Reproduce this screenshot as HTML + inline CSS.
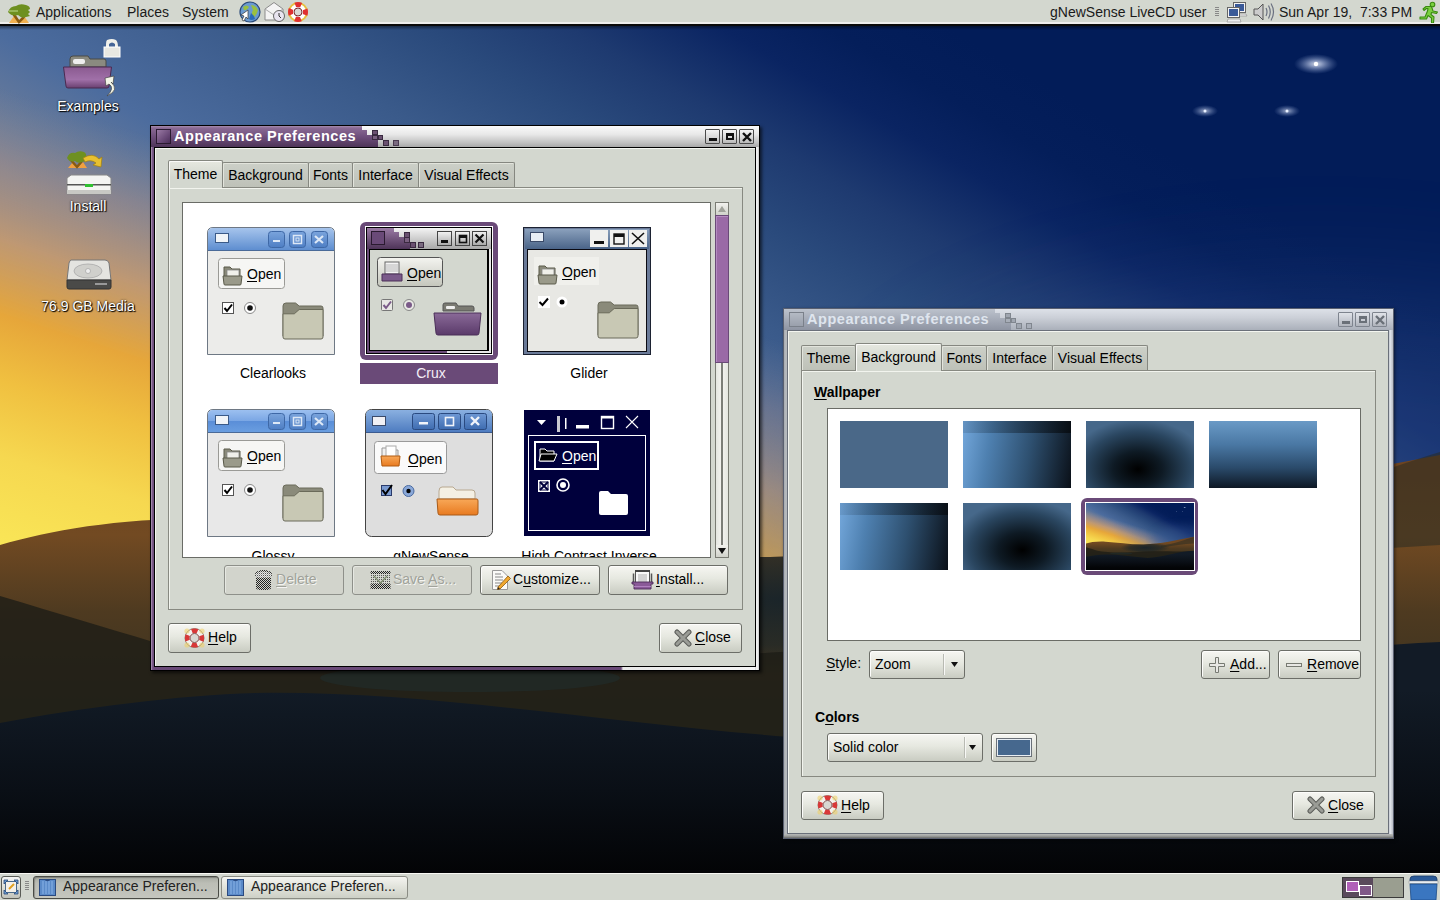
<!DOCTYPE html>
<html><head><meta charset="utf-8">
<style>
*{box-sizing:border-box;margin:0;padding:0}
html,body{width:1440px;height:900px;overflow:hidden;background:#0a1a3a}
body{position:relative;font-family:"Liberation Sans",sans-serif;font-size:14px;color:#000}
.a{position:absolute}
svg{display:block}
#wall{position:absolute;left:0;top:0;width:1440px;height:900px}
#top{position:absolute;left:0;top:0;width:1440px;height:26px;background:linear-gradient(#d3d7cf 0,#d3d7cf 92%,#eeeeec 92%);border-bottom:2px solid #0a0a0a}
#bot{position:absolute;left:0;top:873px;width:1440px;height:27px;background:#d3d7cf;border-top:1px solid #f8f8f4}
.pt{position:absolute;top:4px;font-size:14px;color:#1a1a1a;white-space:pre}
.dlabel{position:absolute;color:#fff;font-size:14px;text-shadow:1px 1px 1px #000,0 0 2px #000;white-space:pre;text-align:center}

.win{position:absolute}
.tb-purple{background:linear-gradient(#a68cae 0,#8a6a94 2px,#6f4f7c 50%,#4e3458 100%)}
.tb-gray{background:linear-gradient(#fafafa 0,#e8e8e8 40%,#c0c0c0 80%,#a8a8a8 100%)}
.wbody{background:#d3d7cf}
.ttl{position:absolute;font-weight:bold;color:#fff;font-size:14.5px;letter-spacing:.55px;white-space:pre}
.tbb{position:absolute;width:15px;height:15px;border:1px solid #4a4a4a;border-radius:1px;background:linear-gradient(#f4f4f4,#d8d8d8 60%,#b8b8b8)}
.tab{position:absolute;height:25px;border:1px solid #858780;border-bottom:none;border-radius:2px 2px 0 0;background:linear-gradient(#ccd0c8,#bec1b8);white-space:pre;font-size:14px;padding-top:4px;text-align:center;box-shadow:inset 1px 1px 0 #e2e4dc}
.tab.act{height:28px;background:linear-gradient(#e6e8e0,#d3d7cf 60%);box-shadow:inset 1px 1px 0 #fafaf8;z-index:2;padding-top:5px}
.nb{position:absolute;border:1px solid #878981;box-shadow:inset 1px 1px 0 #f2f4ee}
.list{position:absolute;background:#fff;border:1px solid #6a6c66}
.btn{position:absolute;border:1px solid #6c6e68;border-radius:3px;background:linear-gradient(#f6f6f2 0,#e6e8e0 45%,#c9ccc2 100%);box-shadow:inset 1px 1px 0 #fdfdfb;white-space:pre;font-size:14px}
.btn.dis{background:#d2d4cc;border-color:#8e908a;box-shadow:inset 1px 1px 0 #e6e8e2;color:#a0a29a;text-shadow:1px 1px 0 #f4f4f2}
.bt{position:absolute;white-space:pre}
.u{text-decoration:underline;text-underline-offset:2px}
.lbl{position:absolute;white-space:pre;font-size:14px;text-align:center}

.tb-i1{background:linear-gradient(#bcc2cc 0,#aab0bc 40%,#8e94a2 100%)}
.tb-i2{background:linear-gradient(#dde1e8 0,#ccd0d8 40%,#aab0ba 100%)}
.ttl2{position:absolute;font-weight:bold;color:#dfe5ee;font-size:14.5px;letter-spacing:.55px;white-space:pre}
.tbb2{position:absolute;width:15px;height:15px;border:1px solid #7e848e;border-radius:1px;background:linear-gradient(#e0e3e8,#c4c8d0 60%,#b0b4bc)}
.combo{position:absolute;border:1px solid #6c6e68;border-radius:3px;background:linear-gradient(#f6f6f2 0,#e6e8e0 45%,#c9ccc2 100%);box-shadow:inset 1px 1px 0 #fdfdfb;white-space:pre;font-size:14px}
.wt{position:absolute;width:108px;height:67px}
</style></head><body>
<svg id="wall" width="1440" height="900" viewBox="0 0 1440 900">
<defs>
<linearGradient id="sky" x1="900" y1="0" x2="602" y2="518" gradientUnits="userSpaceOnUse">
<stop offset="0" stop-color="#021c58"/>
<stop offset="0.1" stop-color="#041e5a"/>
<stop offset="0.19" stop-color="#0a2462"/>
<stop offset="0.317" stop-color="#1e3a70"/>
<stop offset="0.44" stop-color="#2a4a7c"/>
<stop offset="0.583" stop-color="#3a5a8a"/>
<stop offset="0.8" stop-color="#4c6c9e"/>
<stop offset="1" stop-color="#7a8498"/>
</linearGradient>
<linearGradient id="sunl" x1="0" y1="560" x2="139" y2="132" gradientUnits="userSpaceOnUse">
<stop offset="0" stop-color="#fae858" stop-opacity="1"/>
<stop offset="0.22" stop-color="#f6d850" stop-opacity="1"/>
<stop offset="0.38" stop-color="#f0c040" stop-opacity="1"/>
<stop offset="0.52" stop-color="#e6a63a" stop-opacity="1"/>
<stop offset="0.68" stop-color="#c49a70" stop-opacity="0.92"/>
<stop offset="0.85" stop-color="#9a8a8a" stop-opacity="0.6"/>
<stop offset="1" stop-color="#7a8498" stop-opacity="0"/>
</linearGradient>
<linearGradient id="sunm" x1="0" y1="0" x2="1440" y2="0" gradientUnits="userSpaceOnUse">
<stop offset="0" stop-color="#fff"/>
<stop offset="0.25" stop-color="#fff"/>
<stop offset="0.55" stop-color="#aaa"/>
<stop offset="0.8" stop-color="#000"/>
</linearGradient>
<filter id="blur" x="-50%" y="-50%" width="200%" height="200%"><feGaussianBlur stdDeviation="60"/></filter>
<mask id="sunmask"><rect width="1440" height="900" fill="url(#sunm)"/></mask>
<radialGradient id="star" cx="0.5" cy="0.5" r="0.5">
<stop offset="0" stop-color="#fff" stop-opacity="1"/>
<stop offset="0.25" stop-color="#dfe8ff" stop-opacity=".8"/>
<stop offset="1" stop-color="#8aa0d0" stop-opacity="0"/>
</radialGradient>
<linearGradient id="hill1" x1="0" y1="480" x2="0" y2="700" gradientUnits="userSpaceOnUse">
<stop offset="0" stop-color="#6e4420"/>
<stop offset="0.25" stop-color="#724a22"/>
<stop offset="0.6" stop-color="#4e3a20"/>
<stop offset="1" stop-color="#3a3220"/>
</linearGradient>
<linearGradient id="hill3" x1="0" y1="690" x2="0" y2="872" gradientUnits="userSpaceOnUse">
<stop offset="0" stop-color="#121b26"/>
<stop offset="0.55" stop-color="#0a0f16"/>
<stop offset="1" stop-color="#030406"/>
</linearGradient>
</defs>
<g id="wallg"><rect width="1440" height="900" fill="url(#sky)"/>
<rect width="1440" height="900" fill="url(#sunl)" mask="url(#sunmask)"/>
<ellipse cx="1320" cy="470" rx="420" ry="170" fill="#3a5a98" opacity=".35" filter="url(#blur)"/>
<ellipse cx="1316" cy="64" rx="22" ry="10" fill="url(#star)" opacity=".8"/>
<ellipse cx="1205" cy="111" rx="13" ry="6" fill="url(#star)" opacity=".6"/>
<ellipse cx="1287" cy="111" rx="13" ry="6" fill="url(#star)" opacity=".6"/>
<circle cx="1316" cy="64" r="2.2" fill="#fff"/><circle cx="1205" cy="111" r="1.5" fill="#e8f0ff"/><circle cx="1287" cy="111" r="1.5" fill="#e8f0ff"/>
<path id="h1p" d="M0 545 C60 528 140 514 260 520 C420 528 600 560 770 557 C1000 552 1200 500 1440 455 L1440 900 L0 900 Z" fill="url(#hill1)"/>
<radialGradient id="tealg" cx="0.5" cy="0.5" r="0.5"><stop offset="0" stop-color="#17232a" stop-opacity=".95"/><stop offset=".6" stop-color="#1c2628" stop-opacity=".7"/><stop offset="1" stop-color="#1c2628" stop-opacity="0"/></radialGradient>
<clipPath id="h1c"><path d="M0 545 C60 528 140 514 260 520 C420 528 600 560 770 557 C1000 552 1200 500 1440 455 L1440 900 L0 900 Z"/></clipPath>
<ellipse cx="790" cy="600" rx="330" ry="75" fill="url(#tealg)" clip-path="url(#h1c)"/>
<path d="M0 596 C60 614 110 629 150 641 C300 672 500 670 780 652 C1000 640 1200 652 1440 650 L1440 900 L0 900 Z" fill="#1c1c16" opacity="0.78"/>
<path d="M1000 575 C1200 540 1350 480 1440 452 L1440 545 C1300 552 1150 575 1000 600Z" fill="#2a2c22" opacity="0.55"/>
<ellipse cx="470" cy="678" rx="150" ry="14" fill="#1e3032" opacity=".45"/>
<path d="M0 723 C80 708 180 695 255 693 C420 690 600 722 790 737 C1000 745 1200 650 1440 642 L1440 900 L0 900 Z" fill="url(#hill3)"/></g>
</svg>

<!-- top panel -->
<div id="top">
<svg class="a" style="left:6px;top:2px" width="26" height="22" viewBox="0 0 26 22">
<path d="M3 21 L8 14 L13 19 L18 14 L23 21Z" fill="#f0b050"/>
<path d="M6 10 L13 20 L17 16 L20 11" fill="none" stroke="#8a5a10" stroke-width="2.6"/>
<path d="M2 10 Q4 4 10 4 Q14 1 20 3 Q24 4 24 7 L22 8 L24 10 L22 12 L24 14 L20 15 Q16 17 12 13 Q6 15 2 10Z" fill="#6e9020"/>
<path d="M3 9 H12" stroke="#a8c870" stroke-width="1.4"/>
</svg>
<div class="pt" style="left:36px">Applications</div>
<div class="pt" style="left:127px">Places</div>
<div class="pt" style="left:182px">System</div>
<svg class="a" style="left:239px;top:1px" width="22" height="22" viewBox="0 0 22 22">
<circle cx="11" cy="11" r="10" fill="#6a9ad0" stroke="#2a4a78" stroke-width="1.2"/>
<path d="M4 6 Q8 3 10 6 Q8 10 5 9Z M12 4 Q17 4 19 9 Q18 14 14 17 Q12 12 14 9Z" fill="#9ac040"/>
<path d="M12 12 Q15 14 16 18 Q12 20 10 18Z" fill="#2a6ab8"/>
<path d="M2 14 L9 9 L9 18 L7 16 L5 20 L3 19 L5 15Z" fill="#fff" stroke="#333" stroke-width=".7"/>
</svg>
<svg class="a" style="left:264px;top:1px" width="22" height="22" viewBox="0 0 22 22">
<path d="M1 8 L10 1.5 L19 8 V19 H1Z" fill="#f4f4f4" stroke="#8a8a8a"/>
<path d="M1 8 L10 14 L19 8" fill="none" stroke="#aaa"/>
<circle cx="15" cy="15" r="5.5" fill="#e8e4f0" stroke="#666"/>
<path d="M15 12 V15 L17 17" fill="none" stroke="#333" stroke-width="1"/>
</svg>
<svg class="a" style="left:287px;top:1px" width="22" height="22" viewBox="0 0 22 22">
<circle cx="11" cy="11" r="9" fill="#fff" stroke="#e8c040" stroke-width="2"/>
<circle cx="11" cy="11" r="7.5" fill="none" stroke="#e03030" stroke-width="5" stroke-dasharray="5.9 5.9" stroke-dashoffset="3"/>
<circle cx="11" cy="11" r="4" fill="#d8d8d4" stroke="#7a3030" stroke-width="1"/>
</svg>
<div class="pt" style="left:1050px">gNewSense LiveCD user</div>
<div class="a" style="left:1215px;top:7px;width:4px;height:9px;background:repeating-linear-gradient(#888 0,#888 1px,transparent 1px,transparent 2px)"></div>
<svg class="a" style="left:1226px;top:1px" width="22" height="22" viewBox="0 0 22 22">
<rect x="7.5" y="1.5" width="12" height="10" fill="#f4f4f4" stroke="#666"/><rect x="9" y="3" width="9" height="7" fill="#3a5a98"/>
<path d="M10 15 H21 L20 13 H11Z" fill="#eee" stroke="#888" stroke-width=".6"/>
<rect x="1.5" y="6.5" width="12" height="10" fill="#f4f4f4" stroke="#666"/><rect x="3" y="8" width="9" height="7" fill="#3a5a98"/>
<path d="M1 21 H15 L14 18 H2Z" fill="#eee" stroke="#888" stroke-width=".6"/>
</svg>
<svg class="a" style="left:1253px;top:2px" width="22" height="20" viewBox="0 0 22 20">
<path d="M1 7 H5 L10 2 V18 L5 13 H1Z" fill="#ccc" stroke="#555"/>
<path d="M13 6 Q15 10 13 14 M15.5 3.5 Q19 10 15.5 16.5 M18 1.5 Q23 10 18 18.5" fill="none" stroke="#6a7080" stroke-width="1.2"/>
</svg>
<div class="pt" style="left:1279px">Sun Apr 19,  7:33 PM</div>
<svg class="a" style="left:1417px;top:1px" width="22" height="22" viewBox="0 0 22 22">
<g fill="#7ad040" stroke="#3a8a10" stroke-width="1.1" stroke-linejoin="round">
<circle cx="15.5" cy="3.5" r="2.3"/>
<path d="M6 8 L9 5.5 H14.5 L16 10 L20.5 11 L19.5 12.5 L14.5 11.5 L14 13.5 L17 16 L16.5 22 L14.5 22 L14.5 17 L11 14.5 L9.5 18 L3 18 L3 16 L8 16 L10.5 10 L11 7.5 L9.5 7.5 L7 9.5Z"/>
</g>
</svg>
</div>

<div class="a" style="left:0;top:26px;width:1440px;height:4px;background:linear-gradient(rgba(0,0,0,.45),rgba(0,0,0,0))"></div>
<!-- desktop icons -->
<svg class="a" style="left:60px;top:38px" width="64" height="62" viewBox="0 0 64 62">
<defs><linearGradient id="pf" x1="0" y1="0" x2="0" y2="1"><stop offset="0" stop-color="#8a5a90"/><stop offset=".6" stop-color="#a070a8"/><stop offset="1" stop-color="#6a4070"/></linearGradient></defs>
<path d="M10 29 V21 Q10 18 13 18 H28 L30 21 H44 Q46 21 46 23 V29Z" fill="#8a8a80" stroke="#4a4a44"/>
<rect x="13" y="21" width="12" height="5" rx="2" fill="#eee"/>
<path d="M3.5 29 H51.5 L49 48 Q49 50 47 50 H8 Q6 50 6 48Z" fill="url(#pf)" stroke="#4a2a50"/>
<path d="M47 2 Q52 0 56 2 Q58 4 58 9 H55 V6 Q52 3 49 6 V9 H46 V6 Q46 3 47 2Z" fill="#f0f0ea"/>
<rect x="44" y="9" width="16" height="10" fill="#e8e8e2" stroke="#fff"/>
<path d="M45 40 L54 38 L53 46 L51 44 Q60 52 47 58 Q55 50 49 46 L46 48Z" fill="#f4f6e8" stroke="#444" stroke-width=".7"/>
</svg>
<div class="dlabel" style="left:28px;top:98px;width:120px">Examples</div>

<svg class="a" style="left:63px;top:150px" width="52" height="48" viewBox="0 0 52 48">
<path d="M5 18 L10 12 L15 17 L20 12 L24 18Z" fill="#f0a040"/>
<path d="M7 9 L14 17 L19 11" fill="none" stroke="#8a5a10" stroke-width="2.4"/>
<path d="M4 8 Q6 2 12 3 Q16 0 21 2 Q24 4 23 7 L21 9 L23 11 L19 12 Q15 14 12 11 Q7 13 4 8Z" fill="#6e9020"/>
<path d="M20 8 Q30 2 36 9 L39 7 L38 17 L30 15 L33 13 Q28 9 22 12Z" fill="#e8c030" stroke="#a08010" stroke-width=".7"/>
<path d="M4 28 L8 25 H44 L48 28 V44 H4Z" fill="#f4f4f2" stroke="#888"/>
<rect x="4" y="34" width="44" height="1.5" fill="#555"/>
<rect x="4" y="40" width="44" height="4" fill="#c8c8c4"/>
<rect x="22" y="34" width="8" height="3" fill="#30c030"/>
</svg>
<div class="dlabel" style="left:28px;top:198px;width:120px">Install</div>

<svg class="a" style="left:65px;top:258px" width="48" height="34" viewBox="0 0 48 34">
<path d="M6 2 H40 Q43 2 44 5 L46 22 H2 L4 5 Q5 2 6 2Z" fill="#e4e4e0" stroke="#777"/>
<ellipse cx="23" cy="13" rx="14" ry="7" fill="#d0d0cc" stroke="#aaa" stroke-width=".8"/>
<circle cx="23" cy="13" r="2.5" fill="#eee" stroke="#999" stroke-width=".6"/>
<path d="M2 22 H46 V29 Q46 31 44 31 H4 Q2 31 2 29Z" fill="#4a4a48" stroke="#333"/>
<rect x="30" y="25" width="12" height="2" fill="#999"/>
</svg>
<div class="dlabel" style="left:28px;top:298px;width:120px">76.9 GB Media</div>

<!-- ===== WINDOW 1 ===== -->
<div class="win" style="left:150px;top:125px;width:610px;height:546px;background:#000;box-shadow:2px 2px 3px rgba(0,0,0,.6)"></div>
<div class="win" style="left:151px;top:126px;width:608px;height:544px;background:linear-gradient(90deg,#c4b0cc 0,#7e5e8c 1px,#6a4a78 3px,#6a4a78 470px,#e8e8e8 472px,#f4f4f4 100%)"></div>
<div class="win" style="left:755px;top:146px;width:4px;height:524px;background:linear-gradient(90deg,#d0d0d0,#fafafa 50%,#c8c8c8)"></div>
<div class="win tb-purple" style="left:151px;top:126px;width:211px;height:21px"></div>
<div class="win tb-gray" style="left:362px;top:126px;width:397px;height:21px"></div>
<div class="win tb-purple" style="left:362px;top:130px;width:5px;height:17px;background-size:100% 21px;background-position:0 -4px"></div>
<div class="win tb-purple" style="left:367px;top:135px;width:5px;height:12px;background-size:100% 21px;background-position:0 -9px"></div>
<div class="win tb-purple" style="left:372px;top:140px;width:6px;height:7px;background-size:100% 21px;background-position:0 -14px"></div>
<div class="win" style="left:372px;top:130px;width:6px;height:5px;background:#6a5070;border:1px solid #3a2a40"></div>
<div class="win" style="left:372px;top:135px;width:6px;height:5px;background:#7a6080;border:1px solid #3a2a40"></div>
<div class="win" style="left:378px;top:135px;width:5px;height:5px;background:#6a5070;border:1px solid #3a2a40"></div>
<div class="win" style="left:383px;top:140px;width:6px;height:6px;background:#6a5070;border:1px solid #3a2a40"></div>
<div class="win" style="left:393px;top:140px;width:6px;height:6px;background:#7a6a80;border:1px solid #4a3a50"></div>
<div class="win" style="left:156px;top:129px;width:15px;height:15px;border:1px solid #2a1a30;background:linear-gradient(135deg,#9a7aa4,#6a4a78 60%,#4a2e58)"></div>
<div class="ttl" style="left:174px;top:128px">Appearance Preferences</div>
<div class="tbb" style="left:705px;top:129px"><div class="a" style="left:3px;top:8px;width:8px;height:3px;background:#111"></div></div>
<div class="tbb" style="left:722px;top:129px"><div class="a" style="left:3px;top:3px;width:8px;height:7px;border:2px solid #111;border-top-width:3px"></div></div>
<div class="tbb" style="left:739px;top:129px"><svg class="a" style="left:2px;top:2px" width="10" height="10"><path d="M1 1L9 9M9 1L1 9" stroke="#111" stroke-width="2.4"/></svg></div>
<div class="win" style="left:154px;top:147px;width:602px;height:520px;background:#000"></div>
<div class="win wbody" style="left:155px;top:148px;width:600px;height:518px;box-shadow:inset 1px 1px 0 #f4f6f0"></div>

<div class="nb" style="left:168px;top:187px;width:575px;height:423px"></div>
<div class="tab act" style="left:168px;top:160px;width:55px">Theme</div>
<div class="tab" style="left:222px;top:162px;width:87px">Background</div>
<div class="tab" style="left:308px;top:162px;width:45px">Fonts</div>
<div class="tab" style="left:352px;top:162px;width:67px">Interface</div>
<div class="tab" style="left:418px;top:162px;width:97px">Visual Effects</div>

<div class="list" style="left:182px;top:202px;width:529px;height:356px;overflow:hidden" id="themelist"><svg class="a" style="left:24px;top:24px" width="128" height="128" viewBox="0 0 128 128"><defs><linearGradient id="clg" x1="0" y1="0" x2="0" y2="1"><stop offset="0" stop-color="#a6c4ec"/><stop offset="1" stop-color="#5e8ed0"/></linearGradient>
<linearGradient id="clgb" x1="0" y1="0" x2="0" y2="1"><stop offset="0" stop-color="#7aa4dc"/><stop offset="1" stop-color="#4e7ec4"/></linearGradient></defs><path d="M.5 127.5 V6 Q.5 .5 6 .5 H122 Q127.5 .5 127.5 6 V127.5Z" fill="#ececea" stroke="#6e7884"/>
<path d="M1 23 V6 Q1 1 6 1 H122 Q127 1 127 6 V23Z" fill="url(#clg)"/>
<rect x="1" y="23" width="126" height="1" fill="#4a6a98"/>
<rect x="8.5" y="6.5" width="13" height="9" fill="#f0f4f8" stroke="#3a5a88"/>
<rect x="61.5" y="4.5" width="16" height="16" rx="3" fill="url(#clgb)" stroke="#3e68a6"/><rect x="82.5" y="4.5" width="16" height="16" rx="3" fill="url(#clgb)" stroke="#3e68a6"/><rect x="104.5" y="4.5" width="16" height="16" rx="3" fill="url(#clgb)" stroke="#3e68a6"/><rect x="66" y="13" width="7" height="2" fill="#dde8f6"/><rect x="86.5" y="8.5" width="8" height="8" fill="none" stroke="#dde8f6" stroke-width="1.5"/><rect x="89" y="11" width="3" height="3" fill="none" stroke="#dde8f6"/><path d="M108 9 L116 16 M116 9 L108 16" stroke="#dde8f6" stroke-width="2.2"/><rect x="11.5" y="31.5" width="66" height="30" rx="3" fill="#f6f6f4" stroke="#9a9a96"/><g transform="translate(16 38)">
<path d="M1 2 H7 L9 4 H17 V16 H1Z" fill="#8a8a7a" stroke="#5a5a4a" stroke-width="1"/>
<rect x="4" y="5" width="12" height="9" fill="#f0f0ea" stroke="#888" stroke-width=".8"/>
<path d="M0 11 H19 L18 19 Q18 20 17 20 H2 Q1 20 1 19Z" fill="#9a9a8a" stroke="#5a5a4a" stroke-width="1"/>
</g><text x="40" y="52" style="font-family:'Liberation Sans',sans-serif;font-size:14px" fill="#000">Open</text><rect x="40" y="54" width="10" height="1" fill="#000"/><rect x="15.5" y="75.5" width="11" height="11" fill="#fff" stroke="#555"/><path d="M17.5 81 L20 84 L25 77.5" fill="none" stroke="#000" stroke-width="2"/><circle cx="43" cy="81" r="5.5" fill="#fff" stroke="#888"/><circle cx="43" cy="81" r="2.8" fill="#111"/><g transform="translate(75 76)">
<path d="M1 3 Q1 0 4 0 H13.5 L17.2 3 H39 Q41 3 41 5 V33 H1Z" fill="#8a8a7a" stroke="#6a6a5a" stroke-width="1"/>
<path d="M1 10.8 H12.3 L17.2 6.5 H41 V34 Q41 36 39 36 H3 Q1 36 1 34Z" fill="#c8c8b4" stroke="#6a6a5a" stroke-width="1"/>
</g></svg>
<div class="a" style="left:177px;top:19px;width:138px;height:138px;border-radius:6px;background:#6a4a78"></div>
<div class="a" style="left:182px;top:23px;width:128px;height:129px;background:#fff"></div>
<svg class="a" style="left:183px;top:24px" width="126" height="127" viewBox="0 0 126 127"><defs><linearGradient id="cxt" x1="0" y1="0" x2="0" y2="1"><stop offset="0" stop-color="#f4f4f4"/><stop offset="1" stop-color="#a8a8a8"/></linearGradient>
<linearGradient id="cxp" x1="0" y1="0" x2="0" y2="1"><stop offset="0" stop-color="#9a7aa4"/><stop offset="1" stop-color="#4e3458"/></linearGradient>
<linearGradient id="cxb" x1="0" y1="0" x2="0" y2="1"><stop offset="0" stop-color="#f4f4f0"/><stop offset="1" stop-color="#c4c6bc"/></linearGradient>
<linearGradient id="cxf" x1="0" y1="0" x2="0" y2="1"><stop offset="0" stop-color="#8a6a98"/><stop offset="1" stop-color="#5a3a6a"/></linearGradient></defs><rect x="0" y="0" width="126" height="127" fill="#000"/>
<rect x="1" y="1" width="124" height="125" fill="#e8e8e8"/>
<rect x="1" y="1" width="3" height="125" fill="#6a4a78"/>
<rect x="1" y="123" width="80" height="3" fill="#6a4a78"/>
<rect x="1" y="1" width="124" height="21" fill="url(#cxt)"/>
<path d="M1 1 H28 V5 H33 V10 H38 V15 H44 V22 H1Z" fill="url(#cxp)"/>
<rect x="38.5" y="5.5" width="5" height="5" fill="#6a5070" stroke="#3a2a40"/>
<rect x="38.5" y="10.5" width="5" height="5" fill="#7a6080" stroke="#3a2a40"/>
<rect x="44.5" y="15.5" width="5" height="5" fill="#6a5070" stroke="#3a2a40"/>
<rect x="52.5" y="15.5" width="5" height="5" fill="#7a6a80" stroke="#3a2a40"/>
<rect x="5.5" y="4.5" width="13" height="13" fill="#6a4a78" stroke="#2a1a30"/>
<rect x="3" y="22" width="120" height="102" fill="#000"/>
<rect x="4" y="23" width="117" height="100" fill="#d3d7cf"/>
<rect x="71.5" y="4.5" width="14" height="14" fill="url(#cxt)" stroke="#444"/><rect x="89.5" y="4.5" width="14" height="14" fill="url(#cxt)" stroke="#444"/><rect x="106.5" y="4.5" width="14" height="14" fill="url(#cxt)" stroke="#444"/><rect x="75" y="13" width="7" height="3" fill="#111"/><rect x="93.5" y="8.5" width="7" height="7" fill="none" stroke="#111" stroke-width="1.6"/><rect x="93" y="8" width="8" height="3" fill="#111"/><path d="M109.5 7.5 L117.5 15.5 M117.5 7.5 L109.5 15.5" stroke="#111" stroke-width="2.2"/><rect x="11.5" y="30.5" width="65" height="29" rx="3" fill="url(#cxb)" stroke="#555"/><g transform="translate(16 35)"><rect x="3" y="0" width="14" height="12" fill="#f4f4f4" stroke="#666"/><path d="M4 3H16M4 5H16M4 7H16M4 9H16" stroke="#aaa" stroke-width=".8"/><path d="M0 12 H20 V19 H0Z" fill="#7a5a8a" stroke="#4a2e58"/></g><text x="41" y="51" style="font-family:'Liberation Sans',sans-serif;font-size:14px" fill="#000">Open</text><rect x="41" y="53" width="10" height="1" fill="#000"/><rect x="15.5" y="72.5" width="11" height="11" rx="1" fill="#e8e8e4" stroke="#777"/><path d="M17.5 78 L20 81 L25 74.5" fill="none" stroke="#7a5a88" stroke-width="2"/><circle cx="43" cy="78" r="5.5" fill="#e8e8e4" stroke="#888"/><circle cx="43" cy="78" r="3" fill="#7a5a88"/><g transform="translate(68 76)"><path d="M9 8 V2 Q9 0 11 0 H22 L24 3 H38 Q40 3 40 5 V8Z" fill="#7a7a72" stroke="#555"/><rect x="12" y="3" width="9" height="3" rx="1" fill="#eee"/><path d="M0 10 H47 L45 30 Q45 32 43 32 H4 Q2 32 2 30Z" fill="url(#cxf)" stroke="#4a2e58"/></g></svg>
<svg class="a" style="left:340px;top:24px" width="128" height="128" viewBox="0 0 128 128"><defs><linearGradient id="gdt" x1="0" y1="0" x2="0" y2="1"><stop offset="0" stop-color="#8aa0bc"/><stop offset="1" stop-color="#4a6488"/></linearGradient></defs><rect x="0" y="0" width="128" height="128" fill="#1c2232"/>
<rect x="1" y="1" width="126" height="126" fill="#6a7a98"/>
<rect x="2" y="2" width="124" height="20" fill="url(#gdt)"/>
<rect x="4" y="22" width="120" height="103" fill="#0a0a12"/>
<rect x="5" y="23" width="118" height="101" fill="#e8e8e4"/>
<rect x="7.5" y="5.5" width="13" height="9" fill="#e8eef4" stroke="#3a4a68"/>
<rect x="67" y="3" width="18" height="17" fill="#f0f0ee"/><rect x="87" y="3" width="18" height="17" fill="#f0f0ee"/><rect x="106" y="3" width="18" height="17" fill="#f0f0ee"/><rect x="71" y="14" width="10" height="3" fill="#111"/><rect x="91" y="7" width="10" height="10" fill="none" stroke="#111" stroke-width="1.4"/><rect x="91" y="7" width="10" height="3" fill="#111"/><path d="M109 6 L121 17 M121 6 L109 17" stroke="#111" stroke-width="1.6"/><rect x="11" y="30" width="65" height="28" fill="#f0f0ec"/><g transform="translate(15 37)">
<path d="M1 2 H7 L9 4 H17 V16 H1Z" fill="#8a8a7a" stroke="#5a5a4a" stroke-width="1"/>
<rect x="4" y="5" width="12" height="9" fill="#f0f0ea" stroke="#888" stroke-width=".8"/>
<path d="M0 11 H19 L18 19 Q18 20 17 20 H2 Q1 20 1 19Z" fill="#9a9a8a" stroke="#5a5a4a" stroke-width="1"/>
</g><text x="39" y="50" style="font-family:'Liberation Sans',sans-serif;font-size:14px" fill="#000">Open</text><rect x="39" y="52" width="10" height="1" fill="#000"/><rect x="15" y="69" width="12" height="12" fill="#fff"/><path d="M16.5 75 L19.5 78 L25 71.5" fill="none" stroke="#000" stroke-width="2"/><circle cx="39" cy="75" r="5.5" fill="#fff"/><circle cx="39" cy="75" r="2.5" fill="#000"/><g transform="translate(74 75)">
<path d="M1 3 Q1 0 4 0 H13.5 L17.2 3 H39 Q41 3 41 5 V33 H1Z" fill="#8a8a7a" stroke="#6a6a5a" stroke-width="1"/>
<path d="M1 10.8 H12.3 L17.2 6.5 H41 V34 Q41 36 39 36 H3 Q1 36 1 34Z" fill="#c8c8b4" stroke="#6a6a5a" stroke-width="1"/>
</g></svg>
<div class="a" style="left:177px;top:160px;width:138px;height:21px;background:#6a4a78"></div>
<div class="lbl" style="left:10px;top:162px;width:160px;color:#000">Clearlooks</div>
<div class="lbl" style="left:168px;top:162px;width:160px;color:#f4eef6">Crux</div>
<div class="lbl" style="left:326px;top:162px;width:160px;color:#000">Glider</div>
<svg class="a" style="left:24px;top:206px" width="128" height="128" viewBox="0 0 128 128"><defs><linearGradient id="glg" x1="0" y1="0" x2="0" y2="1"><stop offset="0" stop-color="#9cc0f0"/><stop offset=".5" stop-color="#7aa6e4"/><stop offset=".51" stop-color="#5a8ed8"/><stop offset="1" stop-color="#6a9ee0"/></linearGradient>
<linearGradient id="glgb" x1="0" y1="0" x2="0" y2="1"><stop offset="0" stop-color="#7aa4dc"/><stop offset="1" stop-color="#4e7ec4"/></linearGradient></defs><path d="M.5 127.5 V6 Q.5 .5 6 .5 H122 Q127.5 .5 127.5 6 V127.5Z" fill="#e8e8e8" stroke="#6e7884"/>
<path d="M1 23 V6 Q1 1 6 1 H122 Q127 1 127 6 V23Z" fill="url(#glg)"/>
<rect x="1" y="23" width="126" height="1" fill="#4a6a98"/>
<rect x="8.5" y="6.5" width="13" height="9" fill="#f0f4f8" stroke="#3a5a88"/>
<rect x="61.5" y="4.5" width="16" height="16" rx="3" fill="url(#glgb)" stroke="#3e68a6"/><rect x="82.5" y="4.5" width="16" height="16" rx="3" fill="url(#glgb)" stroke="#3e68a6"/><rect x="104.5" y="4.5" width="16" height="16" rx="3" fill="url(#glgb)" stroke="#3e68a6"/><rect x="66" y="13" width="7" height="2" fill="#dde8f6"/><rect x="86.5" y="8.5" width="8" height="8" fill="none" stroke="#dde8f6" stroke-width="1.5"/><rect x="89" y="11" width="3" height="3" fill="none" stroke="#dde8f6"/><path d="M108 9 L116 16 M116 9 L108 16" stroke="#dde8f6" stroke-width="2.2"/><rect x="11.5" y="31.5" width="66" height="30" rx="3" fill="#f6f6f4" stroke="#9a9a96"/><g transform="translate(16 38)">
<path d="M1 2 H7 L9 4 H17 V16 H1Z" fill="#8a8a7a" stroke="#5a5a4a" stroke-width="1"/>
<rect x="4" y="5" width="12" height="9" fill="#f0f0ea" stroke="#888" stroke-width=".8"/>
<path d="M0 11 H19 L18 19 Q18 20 17 20 H2 Q1 20 1 19Z" fill="#9a9a8a" stroke="#5a5a4a" stroke-width="1"/>
</g><text x="40" y="52" style="font-family:'Liberation Sans',sans-serif;font-size:14px" fill="#000">Open</text><rect x="40" y="54" width="10" height="1" fill="#000"/><rect x="15.5" y="75.5" width="11" height="11" fill="#fff" stroke="#555"/><path d="M17.5 81 L20 84 L25 77.5" fill="none" stroke="#000" stroke-width="2"/><circle cx="43" cy="81" r="5.5" fill="#fff" stroke="#888"/><circle cx="43" cy="81" r="2.8" fill="#111"/><g transform="translate(75 76)">
<path d="M1 3 Q1 0 4 0 H13.5 L17.2 3 H39 Q41 3 41 5 V33 H1Z" fill="#8a8a7a" stroke="#6a6a5a" stroke-width="1"/>
<path d="M1 10.8 H12.3 L17.2 6.5 H41 V34 Q41 36 39 36 H3 Q1 36 1 34Z" fill="#c8c8b4" stroke="#6a6a5a" stroke-width="1"/>
</g></svg>
<svg class="a" style="left:182px;top:206px" width="128" height="128" viewBox="0 0 128 128"><defs><linearGradient id="gnt" x1="0" y1="0" x2="0" y2="1"><stop offset="0" stop-color="#8ab0e0"/><stop offset="1" stop-color="#4e7cc0"/></linearGradient>
<linearGradient id="gnb" x1="0" y1="0" x2="0" y2="1"><stop offset="0" stop-color="#6e98d4"/><stop offset="1" stop-color="#3e6cb0"/></linearGradient>
<linearGradient id="gnf" x1="0" y1="0" x2="0" y2="1"><stop offset="0" stop-color="#f8a858"/><stop offset="1" stop-color="#e87a20"/></linearGradient></defs><rect x=".5" y=".5" width="127" height="127" rx="6" fill="#dedede" stroke="#444"/>
<path d="M1 23 V6 Q1 1 6 1 H122 Q127 1 127 6 V23Z" fill="url(#gnt)"/>
<rect x="1" y="23" width="126" height="1" fill="#3a5a90"/>
<rect x="7.5" y="7.5" width="13" height="9" fill="#f0f0f4" stroke="#3a4a6a"/>
<rect x="47.5" y="4.5" width="22" height="16" rx="2" fill="url(#gnb)" stroke="#2a4a80"/><rect x="73.5" y="4.5" width="22" height="16" rx="2" fill="url(#gnb)" stroke="#2a4a80"/><rect x="99.5" y="4.5" width="22" height="16" rx="2" fill="url(#gnb)" stroke="#2a4a80"/><rect x="54" y="13" width="9" height="2.5" fill="#f0f4fa"/><rect x="80.5" y="8.5" width="8" height="8" fill="none" stroke="#f0f4fa" stroke-width="1.6"/><path d="M106 8 L114 16 M114 8 L106 16" stroke="#f0f4fa" stroke-width="2.4"/><rect x="9.5" y="32.5" width="72" height="32" rx="3" fill="#fafafa" stroke="#9a9a9a"/><g transform="translate(15 37)"><path d="M2 2 H8 L10 4 H18 V14 H2Z" fill="#f0f0f0" stroke="#999"/><rect x="6" y="0" width="10" height="12" fill="#fff" stroke="#aaa"/><path d="M1 10 H20 L19 20 H2Z" fill="url(#gnf)" stroke="#b05a10"/></g><text x="43" y="55" style="font-family:'Liberation Sans',sans-serif;font-size:14px" fill="#000">Open</text><rect x="43" y="57" width="10" height="1" fill="#000"/><rect x="16.5" y="76.5" width="10" height="10" fill="#7a9ad0" stroke="#2a3a6a"/><path d="M17.5 81 L20.5 85 L27 76" fill="none" stroke="#000" stroke-width="2"/><circle cx="43.5" cy="82" r="5.5" fill="#8aa8d8" stroke="#4a6aa0"/><circle cx="43.5" cy="82" r="2.2" fill="#000"/><g transform="translate(72 76)"><path d="M2 6 Q2 2 5 2 H16 L19 5 H35 Q38 5 38 8 V14 H2Z" fill="#f4f0e4" stroke="#b8a890"/><path d="M0 14 H40 Q41 14 41 16 V28 Q41 30 39 30 H3 Q1 30 1 28Z" fill="url(#gnf)" stroke="#a85a18"/></g></svg>
<svg class="a" style="left:341px;top:207px" width="126" height="126" viewBox="0 0 126 126"><defs></defs><rect x="0" y="0" width="126" height="126" fill="#00003c"/>
<rect x="4.5" y="25.5" width="117" height="95" fill="none" stroke="#fff"/>
<path d="M13 10 H22 L17.5 15Z" fill="#fff"/>
<rect x="33" y="6" width="3" height="16" fill="#c8c8d0"/>
<rect x="41" y="8" width="1.5" height="11" fill="#fff"/>
<rect x="52" y="15" width="13" height="3.5" fill="#fff"/>
<rect x="77.5" y="6.5" width="12" height="12" fill="none" stroke="#fff" stroke-width="1.4"/><rect x="77" y="6" width="13" height="2.5" fill="#fff"/>
<path d="M102 6 L114 18 M114 6 L102 18" stroke="#fff" stroke-width="1.1"/>
<rect x="11" y="32" width="63" height="27" fill="none" stroke="#fff" stroke-width="2"/>
<path d="M16 39 H21 L23 41 H30 V51 H16Z" fill="#000" stroke="#fff"/><path d="M17 44 H33 L30 51 H15Z" fill="#000" stroke="#fff"/>
<text x="38" y="51" style="font-family:'Liberation Sans',sans-serif;font-size:14px" fill="#fff">Open</text><rect x="38" y="53" width="10" height="1" fill="#fff"/><rect x="14" y="70" width="12" height="12" fill="#fff"/><path d="M16 72 L24 80 M24 72 L16 80" stroke="#00003c" stroke-width="2"/><rect x="16" y="72" width="8" height="8" fill="none" stroke="#00003c" stroke-width="1"/><circle cx="39" cy="75" r="6" fill="none" stroke="#fff" stroke-width="1.6"/><circle cx="39" cy="75" r="3" fill="#fff"/><path d="M75 83 Q75 81 77 81 H84 L87 84 H102 Q104 84 104 86 V103 Q104 105 102 105 H77 Q75 105 75 103Z" fill="#fff"/></svg>
<div class="lbl" style="left:10px;top:345px;width:160px;color:#000">Glossy</div>
<div class="lbl" style="left:168px;top:345px;width:160px;color:#000">gNewSense</div>
<div class="lbl" style="left:326px;top:345px;width:160px;color:#000">High Contrast Inverse</div></div><!--/themelist-->

<div class="win" style="left:715px;top:202px;width:14px;height:356px;background:#7c7e78;border:1px solid #7a7c74"></div>
<div class="win" style="left:716px;top:203px;width:5px;height:354px;background:linear-gradient(90deg,#e4e6e0,#f2f2ee)"></div>
<div class="win" style="left:723px;top:203px;width:5px;height:354px;background:linear-gradient(90deg,#f2f2ee,#e4e6e0)"></div>
<div class="win" style="left:716px;top:203px;width:12px;height:12px;background:linear-gradient(#f2f2ee,#d0d2ca)"><svg class="a" style="left:2px;top:3px" width="8" height="6"><path d="M4 0L8 6H0Z" fill="#a0a29a"/></svg></div>
<div class="win" style="left:715px;top:215px;width:14px;height:148px;background:#9a6aa6;border:1px solid #6a4a78;box-shadow:inset 1px 1px 0 #b48ac0"></div>
<div class="win" style="left:716px;top:545px;width:12px;height:12px;background:linear-gradient(#f2f2ee,#d0d2ca)"><svg class="a" style="left:2px;top:3px" width="8" height="6"><path d="M0 0H8L4 6Z" fill="#111"/></svg></div>

<div class="btn dis" style="left:224px;top:565px;width:120px;height:30px"><svg class="a" style="left:28px;top:3px" width="21" height="22" viewBox="0 0 21 22"><defs><pattern id="dith" width="2" height="2" patternUnits="userSpaceOnUse"><rect width="1" height="1" fill="#222"/><rect x="1" y="1" width="1" height="1" fill="#222"/></pattern><pattern id="dith2" width="2" height="2" patternUnits="userSpaceOnUse"><rect width="1" height="1" fill="#555"/></pattern></defs><path d="M2 6 Q2 2 6 2 L8 1 H13 L15 2 Q19 2 19 6 L18 8 V19 Q18 21 10.5 21 Q3 21 3 19 V8Z" fill="url(#dith)"/><path d="M3 4 Q10 1 18 4 L18 8 Q10 10 3 8Z" fill="#fff" opacity=".6"/><path d="M3 4 Q10 1 18 4 L18 8 Q10 10 3 8Z" fill="url(#dith2)"/></svg><span class="bt" style="left:51px;top:5px"><span class="u">D</span>elete</span></div>
<div class="btn dis" style="left:352px;top:565px;width:120px;height:30px"><svg class="a" style="left:16px;top:3px" width="23" height="22" viewBox="0 0 23 22"><path d="M1.5 2 H21.5 V20 H1.5Z" fill="url(#dith2)"/><path d="M1.5 15 H21.5 V20 H1.5Z" fill="url(#dith)"/><path d="M1.5 2 H21.5 V5 H1.5Z" fill="url(#dith)"/><path d="M5 7 L11.5 14 L18 7" fill="none" stroke="#7a8a6a" stroke-width="1.2"/></svg><span class="bt" style="left:40px;top:5px">Save <span class="u">A</span>s...</span></div>
<div class="btn" style="left:480px;top:565px;width:120px;height:30px"><svg class="a" style="left:9px;top:3px" width="22" height="22" viewBox="0 0 22 22"><path d="M2.5 1.5 H12 L17.5 7 V20.5 H2.5Z" fill="#fafaf8" stroke="#999"/><path d="M5 5H11M5 8H13M5 11H13M5 14H12M5 17H11" stroke="#888" stroke-width="1"/><path d="M8 18 L18 7 L20.5 9.5 L10 20 L7.5 20.5Z" fill="#f0a830" stroke="#8a5a10" stroke-width=".8"/><path d="M7.5 20.5 L8 18 L10 20Z" fill="#222"/></svg><span class="bt" style="left:32px;top:5px">C<span class="u">u</span>stomize...</span></div>
<div class="btn" style="left:608px;top:565px;width:120px;height:30px"><svg class="a" style="left:22px;top:3px" width="23" height="22" viewBox="0 0 23 22"><rect x="4.5" y="2.5" width="14" height="13" fill="#f8f8f8" stroke="#555"/><rect x="4" y="1" width="15" height="2" fill="#444"/><path d="M7 6H16M7 8H16M7 10H16M7 12H16" stroke="#999" stroke-width=".8"/><path d="M2.5 4.5 V14 M20.5 4.5 V14" stroke="#555" stroke-width="1.5"/><path d="M1 13 H22 V15 L20 15 V20 H3 V15 H1Z" fill="#8a5a98" stroke="#4a2a58" stroke-width=".9"/><rect x="3" y="17" width="17" height="1" fill="#b080c0"/></svg><span class="bt" style="left:47px;top:5px"><span class="u">I</span>nstall...</span></div>

<div class="btn" style="left:168px;top:623px;width:83px;height:30px"><svg class="a" style="left:14px;top:3px" width="23" height="22" viewBox="0 0 23 22"><circle cx="11.5" cy="11" r="9.5" fill="#f4f2ee" stroke="#7a6a5a" stroke-width=".8"/><circle cx="11.5" cy="11" r="7.3" fill="none" stroke="#d83838" stroke-width="4.6" stroke-dasharray="5.73 5.73" stroke-dashoffset="2.87"/><circle cx="4" cy="4" r="2.6" fill="#f0d060" opacity=".55"/><circle cx="19" cy="4" r="2.6" fill="#f0d060" opacity=".55"/><circle cx="4" cy="18" r="2.6" fill="#f0d060" opacity=".55"/><circle cx="19" cy="18" r="2.6" fill="#f0d060" opacity=".55"/><circle cx="11.5" cy="11" r="4.5" fill="#d8d8d2" stroke="#7a4040" stroke-width=".9"/></svg><span class="bt" style="left:39px;top:5px"><span class="u">H</span>elp</span></div>
<div class="btn" style="left:659px;top:623px;width:83px;height:30px"><svg class="a" style="left:14px;top:5px" width="18" height="18" viewBox="0 0 18 18"><path d="M3 3 L15 15 M15 3 L3 15" stroke="#5a5c58" stroke-width="5" stroke-linecap="round"/><path d="M3 3 L15 15 M15 3 L3 15" stroke="#9a9c96" stroke-width="3" stroke-linecap="round"/></svg><span class="bt" style="left:35px;top:5px"><span class="u">C</span>lose</span></div>


<!-- ===== WINDOW 2 ===== -->
<div class="win" style="left:783px;top:308px;width:611px;height:531px;background:#5a6070;box-shadow:1px 1px 3px rgba(0,0,0,.5)"></div>
<div class="win" style="left:784px;top:309px;width:609px;height:529px;background:linear-gradient(90deg,#a8acb0,#b8bcc0 2px,#a8acb0 4px)"></div>
<div class="win" style="left:1388px;top:330px;width:5px;height:508px;background:linear-gradient(90deg,#8a909a,#e4e8ee 40%,#b8bcc4)"></div>
<div class="win" style="left:784px;top:834px;width:609px;height:4px;background:linear-gradient(#b8bab8,#a0a2a0 50%,#6a6c6a)"></div>
<div class="win tb-i1" style="left:784px;top:309px;width:211px;height:21px"></div>
<div class="win tb-i2" style="left:995px;top:309px;width:398px;height:21px"></div>
<div class="win tb-i1" style="left:995px;top:313px;width:5px;height:17px;background-size:100% 21px;background-position:0 -4px"></div>
<div class="win tb-i1" style="left:1000px;top:318px;width:5px;height:12px;background-size:100% 21px;background-position:0 -9px"></div>
<div class="win tb-i1" style="left:1005px;top:323px;width:6px;height:7px;background-size:100% 21px;background-position:0 -14px"></div>
<div class="win" style="left:1005px;top:313px;width:6px;height:5px;background:#a0a6b0;border:1px solid #80868e"></div>
<div class="win" style="left:1005px;top:318px;width:6px;height:5px;background:#a8aeb8;border:1px solid #80868e"></div>
<div class="win" style="left:1011px;top:318px;width:5px;height:5px;background:#a0a6b0;border:1px solid #80868e"></div>
<div class="win" style="left:1016px;top:323px;width:6px;height:6px;background:#a0a6b0;border:1px solid #80868e"></div>
<div class="win" style="left:1026px;top:323px;width:6px;height:6px;background:#a8aeb8;border:1px solid #80868e"></div>
<div class="win" style="left:789px;top:312px;width:15px;height:15px;border:1px solid #7a808a;background:linear-gradient(#b4bac4,#9aa0ac)"></div>
<div class="ttl2" style="left:807px;top:311px">Appearance Preferences</div>
<div class="tbb2" style="left:1338px;top:312px"><div class="a" style="left:3px;top:8px;width:8px;height:3px;background:#6a7078"></div></div>
<div class="tbb2" style="left:1355px;top:312px"><div class="a" style="left:3px;top:3px;width:8px;height:7px;border:2px solid #6a7078;border-top-width:3px"></div></div>
<div class="tbb2" style="left:1372px;top:312px"><svg class="a" style="left:2px;top:2px" width="10" height="10"><path d="M1 1L9 9M9 1L1 9" stroke="#6a7078" stroke-width="2.4"/></svg></div>
<div class="win" style="left:787px;top:330px;width:602px;height:504px;background:#6a707a"></div>
<div class="win wbody" style="left:788px;top:331px;width:600px;height:502px;box-shadow:inset 1px 1px 0 #f4f6f0"></div>

<div class="nb" style="left:801px;top:370px;width:575px;height:407px"></div>
<div class="tab" style="left:801px;top:345px;width:55px">Theme</div>
<div class="tab act" style="left:855px;top:343px;width:87px">Background</div>
<div class="tab" style="left:941px;top:345px;width:46px">Fonts</div>
<div class="tab" style="left:986px;top:345px;width:67px">Interface</div>
<div class="tab" style="left:1052px;top:345px;width:96px">Visual Effects</div>

<div class="a" style="left:814px;top:384px;font-weight:bold;white-space:pre"><span class="u">W</span>allpaper</div>
<div class="list" style="left:827px;top:408px;width:534px;height:233px"></div>
<div class="wt" style="left:840px;top:421px;background:#4a6888"></div>
<div class="wt" style="left:963px;top:421px;background:linear-gradient(100deg,#74a8dc 0,#4e80b0 25%,#2e5070 60%,#0a1018 100%)"><div class="a" style="left:0;top:0;width:108px;height:12px;background:linear-gradient(90deg,rgba(20,40,60,.15),rgba(0,0,0,.55))"></div></div>
<div class="wt" style="left:1086px;top:421px;background:radial-gradient(ellipse 70px 50px at 48% 72%,#000 0,#0e1a24 35%,#2a4660 75%,#46688a 100%)"></div>
<div class="wt" style="left:1209px;top:421px;background:linear-gradient(#6a9ac6 0,#4a78a4 35%,#2a4a6a 70%,#0e1824 100%)"></div>
<div class="wt" style="left:840px;top:503px;background:linear-gradient(100deg,#74a8dc 0,#4e80b0 25%,#2e5070 60%,#0a1018 100%)"><div class="a" style="left:0;top:0;width:108px;height:12px;background:linear-gradient(90deg,rgba(20,40,60,.1),rgba(0,0,0,.5))"></div></div>
<div class="wt" style="left:963px;top:503px;background:radial-gradient(ellipse 70px 50px at 55% 70%,#000 0,#0e1a24 35%,#2a4660 75%,#46688a 100%)"></div>
<div class="a" style="left:1081px;top:498px;width:117px;height:77px;border-radius:6px;background:#6a4a78"></div>
<div class="a" style="left:1085px;top:502px;width:110px;height:69px;background:#fff"></div>
<svg class="a" style="left:1086px;top:503px" width="108" height="67" viewBox="0 0 1440 900" preserveAspectRatio="none"><use href="#wallg"/></svg>

<div class="a" style="left:826px;top:655px;white-space:pre"><span class="u">S</span>tyle:</div>
<div class="combo" style="left:869px;top:650px;width:96px;height:29px"><span class="bt" style="left:5px;top:5px">Zoom</span><div class="a" style="left:73px;top:3px;width:1px;height:21px;background:#b8bab2;box-shadow:1px 0 0 #f8f8f6"></div><svg class="a" style="left:81px;top:11px" width="7" height="5"><path d="M0 0H7L3.5 5Z" fill="#111"/></svg></div>
<div class="btn" style="left:1201px;top:650px;width:69px;height:29px"><svg class="a" style="left:6px;top:5px" width="18" height="18"><path d="M7.5 1.5H10.5V7.5H16.5V10.5H10.5V16.5H7.5V10.5H1.5V7.5H7.5Z" fill="#e8e8e4" stroke="#777a72"/></svg><span class="bt" style="left:28px;top:5px"><span class="u">A</span>dd...</span></div>
<div class="btn" style="left:1278px;top:650px;width:83px;height:29px"><svg class="a" style="left:6px;top:5px" width="18" height="18"><rect x="1.5" y="7.5" width="15" height="3" fill="#e8e8e4" stroke="#777a72"/></svg><span class="bt" style="left:28px;top:5px"><span class="u">R</span>emove</span></div>

<div class="a" style="left:815px;top:709px;font-weight:bold;white-space:pre">C<span class="u">o</span>lors</div>
<div class="combo" style="left:827px;top:733px;width:156px;height:29px"><span class="bt" style="left:5px;top:5px">Solid color</span><div class="a" style="left:136px;top:3px;width:1px;height:21px;background:#b8bab2;box-shadow:1px 0 0 #f8f8f6"></div><svg class="a" style="left:141px;top:11px" width="7" height="5"><path d="M0 0H7L3.5 5Z" fill="#111"/></svg></div>
<div class="btn" style="left:991px;top:733px;width:46px;height:29px"><div class="a" style="left:5px;top:5px;width:34px;height:17px;background:#46688e;border:1px solid #e8eef4;outline:1px solid #6a7078"></div></div>

<div class="btn" style="left:801px;top:791px;width:83px;height:29px"><svg class="a" style="left:14px;top:2px" width="23" height="22" viewBox="0 0 23 22"><circle cx="11.5" cy="11" r="9.5" fill="#f4f2ee" stroke="#7a6a5a" stroke-width=".8"/><circle cx="11.5" cy="11" r="7.3" fill="none" stroke="#d83838" stroke-width="4.6" stroke-dasharray="5.73 5.73" stroke-dashoffset="2.87"/><circle cx="4" cy="4" r="2.6" fill="#f0d060" opacity=".55"/><circle cx="19" cy="4" r="2.6" fill="#f0d060" opacity=".55"/><circle cx="4" cy="18" r="2.6" fill="#f0d060" opacity=".55"/><circle cx="19" cy="18" r="2.6" fill="#f0d060" opacity=".55"/><circle cx="11.5" cy="11" r="4.5" fill="#d8d8d2" stroke="#7a4040" stroke-width=".9"/></svg><span class="bt" style="left:39px;top:5px"><span class="u">H</span>elp</span></div>
<div class="btn" style="left:1292px;top:791px;width:83px;height:29px"><svg class="a" style="left:14px;top:4px" width="18" height="18" viewBox="0 0 18 18"><path d="M3 3 L15 15 M15 3 L3 15" stroke="#5a5c58" stroke-width="5" stroke-linecap="round"/><path d="M3 3 L15 15 M15 3 L3 15" stroke="#9a9c96" stroke-width="3" stroke-linecap="round"/></svg><span class="bt" style="left:35px;top:5px"><span class="u">C</span>lose</span></div>

<!-- bottom panel -->
<div id="bot">
<div class="a" style="left:1px;top:2px;width:20px;height:23px;border:1px solid #5a5c56;border-radius:3px;background:linear-gradient(#f4f4f2,#d8dad2 60%,#c0c2ba)"></div>
<svg class="a" style="left:3px;top:5px" width="16" height="16" viewBox="0 0 16 16">
<rect x="2.5" y="2.5" width="11" height="11" fill="#f4f0e8" stroke="#4a6a8a"/>
<path d="M1 1 H5 L1 5Z M15 1 H11 L15 5Z M1 15 H5 L1 11Z M15 15 H11 L15 11Z" fill="#6a9ad0" stroke="#2a4a78" stroke-width=".8"/>
<path d="M6 10 L11 5" stroke="#e0a020" stroke-width="2"/>
</svg>
<div class="a" style="left:25px;top:7px;width:4px;height:9px;background:repeating-linear-gradient(#888 0,#888 1px,transparent 1px,transparent 2px)"></div>
<div class="a" style="left:33px;top:2px;width:186px;height:23px;border:1px solid #4a4c46;border-radius:3px;background:linear-gradient(#a8aba2,#bcbeb6 30%,#c4c6be);box-shadow:inset 1px 1px 1px rgba(0,0,0,.25)"></div>
<svg class="a" style="left:39px;top:5px" width="17" height="17" viewBox="0 0 17 17"><rect x=".5" y=".5" width="16" height="16" fill="#5a8ac8" stroke="#2a4a80"/><path d="M4 2 V15 M7 2 V15 M10 2 V15 M13 2 V15" stroke="#8ab4e8" stroke-width="1"/><path d="M5 .5 Q8.5 4 12 .5" fill="#2a4a80"/></svg>
<div class="a" style="left:63px;top:4px;font-size:14px;color:#222;white-space:pre">Appearance Preferen...</div>
<div class="a" style="left:221px;top:2px;width:187px;height:23px;border:1px solid #8a8c84;border-radius:3px;background:linear-gradient(#f4f4f0,#e0e2da 50%,#cdd0c6)"></div>
<svg class="a" style="left:227px;top:5px" width="17" height="17" viewBox="0 0 17 17"><rect x=".5" y=".5" width="16" height="16" fill="#5a8ac8" stroke="#2a4a80"/><path d="M4 2 V15 M7 2 V15 M10 2 V15 M13 2 V15" stroke="#8ab4e8" stroke-width="1"/><path d="M5 .5 Q8.5 4 12 .5" fill="#2a4a80"/></svg>
<div class="a" style="left:251px;top:4px;font-size:14px;color:#222;white-space:pre">Appearance Preferen...</div>
<div class="a" style="left:1342px;top:3px;width:62px;height:21px;background:#5a4a5c;border:1px solid #3a3a3a"></div>
<div class="a" style="left:1373px;top:4px;width:30px;height:19px;background:#9a9e90"></div>
<div class="a" style="left:1346px;top:7px;width:13px;height:11px;background:#b060b8;border:1px solid #fff"></div>
<div class="a" style="left:1359px;top:11px;width:13px;height:11px;background:#805888;border:1px solid #fff"></div>
<svg class="a" style="left:1408px;top:1px" width="31" height="25" viewBox="0 0 31 25">
<path d="M2 4 Q2 1 6 1 H25 Q29 1 29 4 V6 H2Z" fill="#2a5a98" stroke="#1a3a68" stroke-width=".8"/>
<rect x="1" y="6" width="29" height="2.5" fill="#e8eef4" stroke="#888" stroke-width=".5"/>
<path d="M2 9 H29 L28 25 H3Z" fill="#3a76c0" stroke="#1a4a88" stroke-width=".8"/>
</svg>
</div>

</body></html>
